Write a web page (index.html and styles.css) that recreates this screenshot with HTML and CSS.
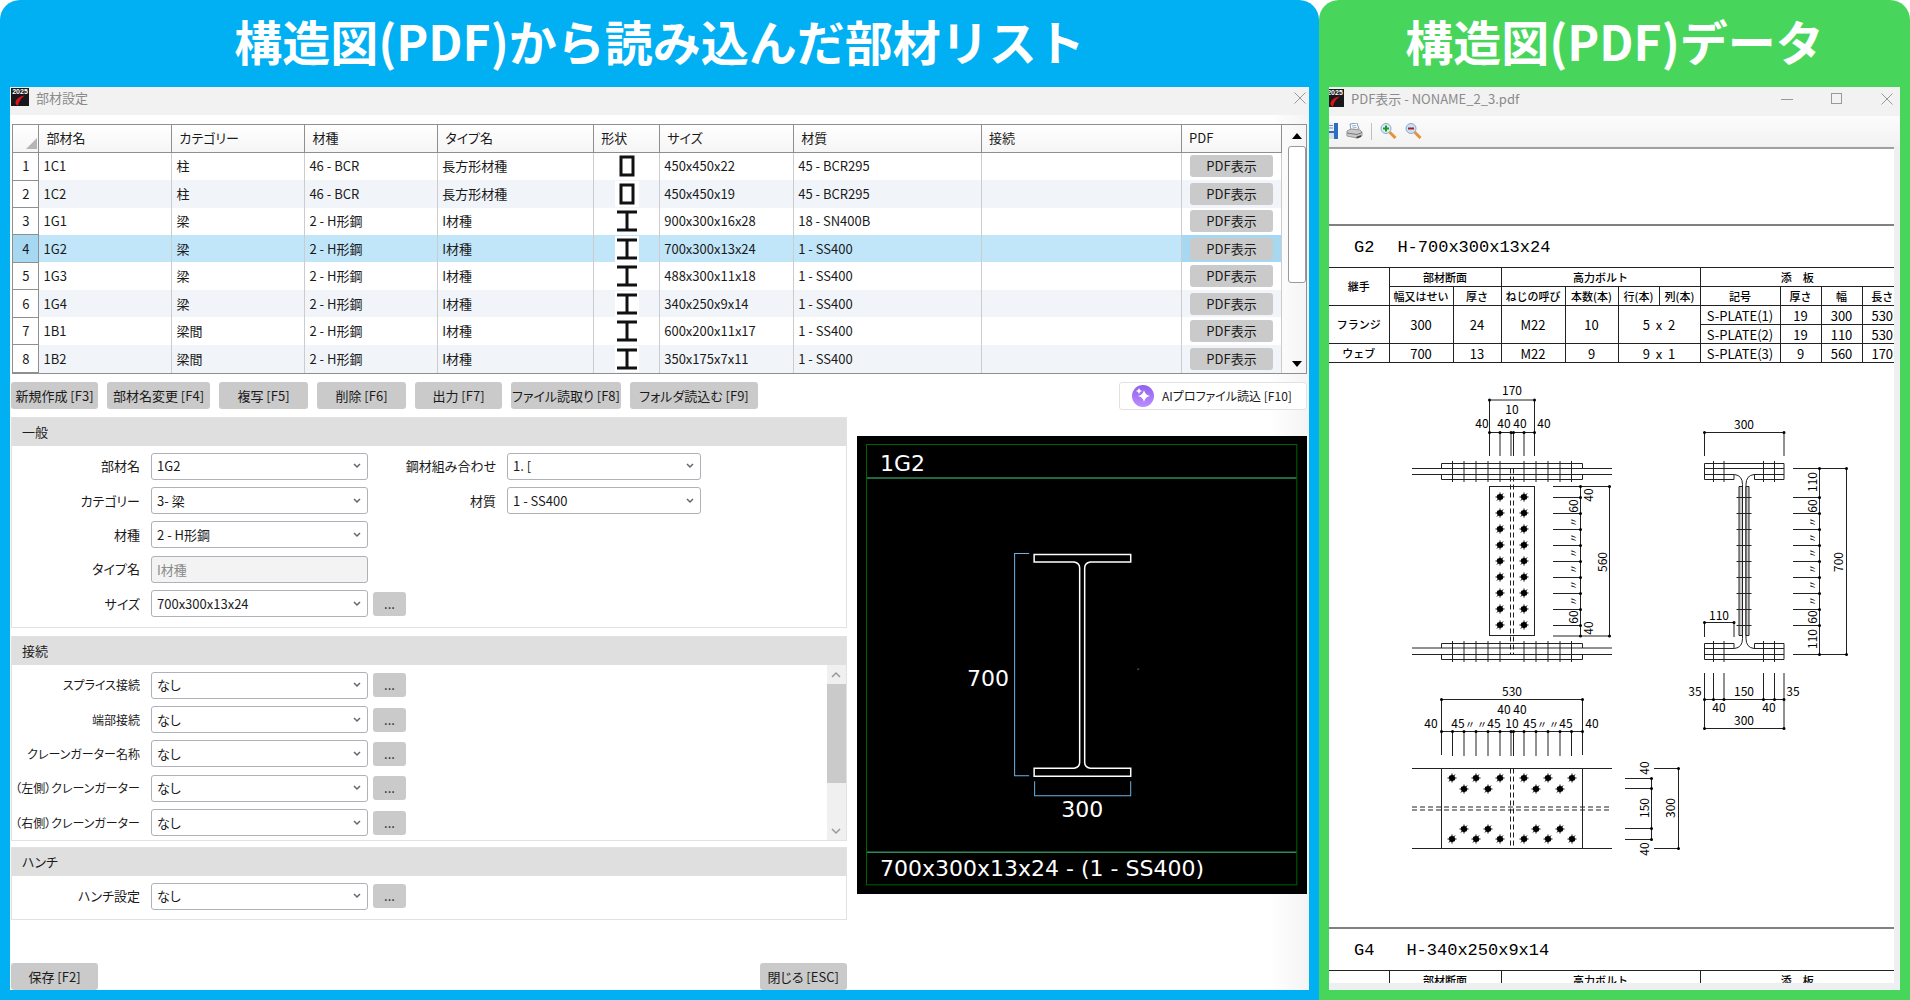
FILE: index.html
```
<!DOCTYPE html>
<html lang="ja">
<head>
  <meta charset="UTF-8">
  <title>部材設定</title>
  <link rel="stylesheet" href="styles.css">
</head>
<body>
  <!-- Shared symbols -->
  <svg class="symbols" aria-hidden="true">
    <symbol id="app-icon" viewBox="0 0 18 18">
      <rect width="18" height="18" fill="#17171c"/>
      <path d="M14 7.500C9 8 4.500 11 4.500 14.500c0 1.500 1 2.800 2.500 3C8 14 9.500 10 14 7.500z" fill="#e0111a"/>
      <text x="9" y="6" font-size="7" font-weight="700" fill="#fff" text-anchor="middle" font-family="Liberation Sans, sans-serif">2025</text>
    </symbol>
    <symbol id="shape-h" viewBox="0 0 24 26">
      <rect width="24" height="26" fill="#fff"/>
      <path d="M2 4h20M12 4v18M2 22h20" stroke="#111" stroke-width="3" fill="none"/>
    </symbol>
    <symbol id="shape-box" viewBox="0 0 24 26">
      <rect width="24" height="26" fill="#fff"/>
      <rect x="6" y="4" width="12" height="18" stroke="#111" stroke-width="3" fill="none"/>
    </symbol>
    <symbol id="icon-close" viewBox="0 0 12 12">
      <path d="M0.500 0.500l11 11M11.500 0.500l-11 11" stroke="#999" fill="none"/>
    </symbol>
    <symbol id="bolt" viewBox="-6 -6 12 12" overflow="visible">
      <circle r="3"/>
      <path d="M-4.500 0h9M0-4.500v9M-3 3.500l6-7M-3-2l6 4" stroke="#000" fill="none"/>
    </symbol>
  </svg>

  <div class="page">
    <section class="panel panel-blue">
      <h1>構造図(PDF)から読み込んだ部材リスト</h1>
      <div class="window">
        <header class="titlebar">
          <svg class="app-icon"><use href="#app-icon"/></svg>
          <span>部材設定</span>
          <button class="win-btn" aria-label="閉じる"><svg width="12" height="12"><use href="#icon-close"/></svg></button>
        </header>

        <div class="grid-wrap">
          <table class="grid">
            <colgroup>
              <col class="w26"><col class="w133"><col class="w133"><col class="w133"><col class="w156"><col class="w66"><col class="w134"><col class="w188"><col class="w200"><col class="w100">
            </colgroup>
            <thead>
              <tr><th class="corner"><svg width="11" height="11"><path d="M11 0v11H0z" fill="#b5b5b5"/></svg></th><th>部材名</th><th>カテゴリー</th><th>材種</th><th>タイプ名</th><th>形状</th><th>サイズ</th><th>材質</th><th>接続</th><th>PDF</th></tr>
            </thead>
            <tbody>
              <tr><th scope="row">1</th><td>1C1</td><td>柱</td><td>46 - BCR</td><td>長方形材種</td><td class="shape"><svg><use href="#shape-box"/></svg></td><td>450x450x22</td><td>45 - BCR295</td><td></td><td class="pdf"><button>PDF表示</button></td></tr>
              <tr><th scope="row">2</th><td>1C2</td><td>柱</td><td>46 - BCR</td><td>長方形材種</td><td class="shape"><svg><use href="#shape-box"/></svg></td><td>450x450x19</td><td>45 - BCR295</td><td></td><td class="pdf"><button>PDF表示</button></td></tr>
              <tr><th scope="row">3</th><td>1G1</td><td>梁</td><td>2 - H形鋼</td><td>I材種</td><td class="shape"><svg><use href="#shape-h"/></svg></td><td>900x300x16x28</td><td>18 - SN400B</td><td></td><td class="pdf"><button>PDF表示</button></td></tr>
              <tr class="selected"><th scope="row">4</th><td>1G2</td><td>梁</td><td>2 - H形鋼</td><td>I材種</td><td class="shape"><svg><use href="#shape-h"/></svg></td><td>700x300x13x24</td><td>1 - SS400</td><td></td><td class="pdf"><button>PDF表示</button></td></tr>
              <tr><th scope="row">5</th><td>1G3</td><td>梁</td><td>2 - H形鋼</td><td>I材種</td><td class="shape"><svg><use href="#shape-h"/></svg></td><td>488x300x11x18</td><td>1 - SS400</td><td></td><td class="pdf"><button>PDF表示</button></td></tr>
              <tr><th scope="row">6</th><td>1G4</td><td>梁</td><td>2 - H形鋼</td><td>I材種</td><td class="shape"><svg><use href="#shape-h"/></svg></td><td>340x250x9x14</td><td>1 - SS400</td><td></td><td class="pdf"><button>PDF表示</button></td></tr>
              <tr><th scope="row">7</th><td>1B1</td><td>梁間</td><td>2 - H形鋼</td><td>I材種</td><td class="shape"><svg><use href="#shape-h"/></svg></td><td>600x200x11x17</td><td>1 - SS400</td><td></td><td class="pdf"><button>PDF表示</button></td></tr>
              <tr><th scope="row">8</th><td>1B2</td><td>梁間</td><td>2 - H形鋼</td><td>I材種</td><td class="shape"><svg><use href="#shape-h"/></svg></td><td>350x175x7x11</td><td>1 - SS400</td><td></td><td class="pdf"><button>PDF表示</button></td></tr>
            </tbody>
          </table>
          <div class="grid-scroll">
            <svg width="10" height="6"><path d="M5 0l5 6H0z"/></svg>
            <div class="grid-thumb"></div>
            <svg width="10" height="6"><path d="M5 6l5-6H0z"/></svg>
          </div>
        </div>

        <div class="toolbar">
          <button class="btn b87">新規作成 [F3]</button>
          <button class="btn b103">部材名変更 [F4]</button>
          <button class="btn b89">複写 [F5]</button>
          <button class="btn b89">削除 [F6]</button>
          <button class="btn b87">出力 [F7]</button>
          <button class="btn b110">ファイル読取り [F8]</button>
          <button class="btn b128">フォルダ読込む [F9]</button>
          <button class="btn-ai">
            <svg width="22" height="22" viewBox="0 0 22 22">
              <defs><linearGradient id="ai" x1="0" y1="0" x2="0" y2="1"><stop offset="0" stop-color="#8f62ea"/><stop offset="1" stop-color="#bd8cff"/></linearGradient></defs>
              <circle cx="11" cy="11" r="11" fill="url(#ai)"/>
              <path d="M12 5q1 5 6 6q-5 1-6 6q-1-5-6-6q5-1 6-6zM7 3q.500 2.500 3 3q-2.500.500-3 3q-.500-2.500-3-3q2.500-.500 3-3z" fill="#fff"/>
            </svg>
            AIプロファイル読込 [F10]
          </button>
        </div>

        <div class="main">
          <form class="forms" id="member-form">
            <fieldset class="group">
              <legend>一般</legend>
              <div class="group-body">
                <div class="fields">
                  <div class="row">
                    <label for="name">部材名</label>
                    <select id="name"><option>1G2</option></select>
                    <label for="combo">鋼材組み合わせ</label>
                    <select class="select2" id="combo"><option>1. [</option></select>
                  </div>
                  <div class="row">
                    <label for="category">カテゴリー</label>
                    <select id="category"><option>3- 梁</option></select>
                    <label for="material">材質</label>
                    <select class="select2" id="material"><option>1 - SS400</option></select>
                  </div>
                  <div class="row">
                    <label for="kind">材種</label>
                    <select id="kind"><option>2 - H形鋼</option></select>
                  </div>
                  <div class="row">
                    <label for="type">タイプ名</label>
                    <input type="text" id="type" value="I材種" disabled>
                  </div>
                  <div class="row">
                    <label for="size">サイズ</label>
                    <select id="size"><option>700x300x13x24</option></select>
                    <button type="button" class="more">...</button>
                  </div>
                </div>
              </div>
            </fieldset>

            <fieldset class="group group-joint">
              <legend>接続</legend>
              <div class="group-body">
                <div class="fields">
                  <div class="row">
                    <label for="splice">スプライス接続</label>
                    <select id="splice"><option>なし</option></select>
                    <button type="button" class="more">...</button>
                  </div>
                  <div class="row">
                    <label for="end">端部接続</label>
                    <select id="end"><option>なし</option></select>
                    <button type="button" class="more">...</button>
                  </div>
                  <div class="row">
                    <label for="crane">クレーンガーター名称</label>
                    <select id="crane"><option>なし</option></select>
                    <button type="button" class="more">...</button>
                  </div>
                  <div class="row">
                    <label for="crane-left">（左側）クレーンガーター</label>
                    <select id="crane-left"><option>なし</option></select>
                    <button type="button" class="more">...</button>
                  </div>
                  <div class="row">
                    <label for="crane-right">（右側）クレーンガーター</label>
                    <select id="crane-right"><option>なし</option></select>
                    <button type="button" class="more">...</button>
                  </div>
                </div>
                <div class="side-scroll">
                  <svg width="10" height="19" viewBox="0 0 10 19"><path d="M1 12l4-4 4 4" stroke="#999" stroke-width="1.500" fill="none"/></svg>
                  <div class="side-thumb"></div>
                  <svg width="10" height="19" viewBox="0 0 10 19"><path d="M1 8l4 4 4-4" stroke="#999" stroke-width="1.500" fill="none"/></svg>
                </div>
              </div>
            </fieldset>

            <fieldset class="group group-haunch">
              <legend>ハンチ</legend>
              <div class="group-body">
                <div class="fields">
                  <div class="row">
                    <label for="haunch">ハンチ設定</label>
                    <select id="haunch"><option>なし</option></select>
                    <button type="button" class="more">...</button>
                  </div>
                </div>
              </div>
            </fieldset>

            <div class="actions">
              <button type="button" class="btn b87">保存 [F2]</button>
              <button type="button" class="btn b87">閉じる [ESC]</button>
            </div>
          </form>

          <!-- Section preview -->
          <svg class="preview" viewBox="0 0 450 458">
            <rect width="450" height="458"/>
            <rect x="9.500" y="8.500" width="430" height="440" fill="none" stroke="#006400"/>
            <path d="M10 42h429M10 416h429" stroke="#2e8b57" stroke-width="1.500"/>
            <g fill="none" stroke="#fff" stroke-width="1.500">
              <path d="M177 118.500h96.500v7.500H233q-5.500 1-5.500 6v194q0 5 5.500 6h40.500v8H177v-8h40q5.500-1 5.500-6V132q0-5-5.500-6h-40z"/>
            </g>
            <path d="M172 117.500h-14.500v222H172M177.500 345v14.500h96V345" fill="none" stroke="#6db3e6"/>
            <circle cx="281" cy="233" r="1" fill="#444"/>
            <g class="preview-text">
              <text x="23" y="35">1G2</text>
              <text x="131" y="250" text-anchor="middle">700</text>
              <text x="225" y="381" text-anchor="middle">300</text>
              <text x="23" y="440">700x300x13x24 - (1 - SS400)</text>
            </g>
          </svg>
        </div>
      </div>
    </section>

    <section class="panel panel-green">
      <h1>構造図(PDF)データ</h1>
      <div class="window pdf-window">
        <header class="titlebar">
          <svg class="app-icon app-icon-cut" viewBox="3 0 15 18"><use href="#app-icon" width="18" height="18"/></svg>
          <span>PDF表示 - NONAME_2_3.pdf</span>
          <div class="win-btns">
            <button class="win-btn" aria-label="最小化"><svg width="12" height="12"><path d="M0 6.500h12" stroke="#999"/></svg></button>
            <button class="win-btn" aria-label="最大化"><svg width="12" height="12"><rect x=".500" y=".500" width="10" height="10" stroke="#999" fill="none"/></svg></button>
            <button class="win-btn" aria-label="閉じる"><svg width="12" height="12"><use href="#icon-close"/></svg></button>
          </div>
        </header>
        <div class="pdf-tools">
          <button aria-label="保存">
            <svg width="9" height="16" viewBox="7 0 9 16"><path d="M0 0h16v16H0z" fill="#2f6cc0"/><path d="M3 0h9v8H3z" fill="#e8f0fa"/><path d="M4 10h8v6H4z" fill="#d5dde8"/><path d="M5 2.500h6M5 5h6" stroke="#88a"/></svg>
          </button>
          <button aria-label="印刷">
            <svg width="17" height="16" viewBox="0 0 17 16"><path d="M4 1l7-1 2 6-8 1z" fill="#fff" stroke="#8a9bb0"/><path d="M6 3l4-.500M6.500 5l4-.500" stroke="#7fb0e0"/><path d="M1 8l4-2 9 1 2 2v4l-5 2-10-2z" fill="#c9c9c9" stroke="#999"/><path d="M1 10l10 1.500 5-2" stroke="#777" fill="none"/><path d="M10 14l5-2v2l-4 1.500z" fill="#444"/></svg>
          </button>
          <span class="sep"></span>
          <button aria-label="拡大">
            <svg width="17" height="16" viewBox="0 0 17 16"><path d="M9.500 9l6 6" stroke="#e8903a" stroke-width="3"/><circle cx="6" cy="5.500" r="5" fill="#d8ebfa" stroke="#8aa9c8"/><path d="M6 2.500v6M3 5.500h6" stroke="#1f9a1f" stroke-width="2"/></svg>
          </button>
          <button aria-label="縮小">
            <svg width="17" height="16" viewBox="0 0 17 16"><path d="M9.500 9l6 6" stroke="#e8903a" stroke-width="3"/><circle cx="6" cy="5.500" r="5" fill="#c8e2f8" stroke="#8aa9c8"/><path d="M3 5.500h6" stroke="#b01f1f" stroke-width="2"/></svg>
          </button>
        </div>

        <div class="sheet">
          <div class="sheet-title"><span>G2</span><span>H-700x300x13x24</span></div>
          <table class="joint">
            <colgroup>
              <col class="j60"><col class="j64"><col class="j48"><col class="j64"><col class="j53"><col class="j41"><col class="j41"><col class="j80"><col class="j41"><col class="j41"><col class="j32">
            </colgroup>
            <thead>
              <tr><th rowspan="2">継手</th><th colspan="2">部材断面</th><th colspan="4">高力ボルト</th><th colspan="4">添　板</th></tr>
              <tr><th>幅又はせい</th><th>厚さ</th><th>ねじの呼び</th><th>本数(本)</th><th>行(本)</th><th>列(本)</th><th>記号</th><th>厚さ</th><th>幅</th><th class="cut">長さ</th></tr>
            </thead>
            <tbody>
              <tr><th rowspan="2">フランジ</th><td rowspan="2">300</td><td rowspan="2">24</td><td rowspan="2">M22</td><td rowspan="2">10</td><td rowspan="2" colspan="2">5 &nbsp;x &nbsp;2</td><td>S-PLATE(1)</td><td>19</td><td>300</td><td class="cut">530</td></tr>
              <tr><td>S-PLATE(2)</td><td>19</td><td>110</td><td class="cut">530</td></tr>
              <tr><th>ウェブ</th><td>700</td><td>13</td><td>M22</td><td>9</td><td colspan="2">9 &nbsp;x &nbsp;1</td><td>S-PLATE(3)</td><td>9</td><td>560</td><td class="cut">170</td></tr>
            </tbody>
          </table>

          <svg class="drawing" viewBox="0 0 565 563">
            <!-- Elevation -->
            <path d="M160.500 92V36h45v56M160.500 68.500h45M171 68v24M182 68v24M184.500 68v24M195 68v24"/>
            <path d="M83 104.500h200M83 110.500h200M112.500 104V99.500h141V104M112.500 111v4.500h141V111"/>
            <path d="M83 284h200M83 290.500h200M112.500 284v-4.500h141v4.500M112.500 291v4.500h141V291"/>
            <path d="M123.500 97v21M135 97v21M147 97v21M159 97v21M171 97v21M195 97v21M207 97v21M219 97v21M231 97v21M242.500 97v21"/>
            <path d="M123.500 277v21M135 277v21M147 277v21M159 277v21M171 277v21M195 277v21M207 277v21M219 277v21M231 277v21M242.500 277v21"/>
            <rect x="160.500" y="122.500" width="45" height="149"/>
            <path class="dash" d="M181.500 104.500v186M184.500 104.500v186"/>
            <g class="bolts">
              <use href="#bolt" x="165" y="127" width="12" height="12"/><use href="#bolt" x="189" y="127" width="12" height="12"/>
              <use href="#bolt" x="165" y="143" width="12" height="12"/><use href="#bolt" x="189" y="143" width="12" height="12"/>
              <use href="#bolt" x="165" y="159" width="12" height="12"/><use href="#bolt" x="189" y="159" width="12" height="12"/>
              <use href="#bolt" x="165" y="175" width="12" height="12"/><use href="#bolt" x="189" y="175" width="12" height="12"/>
              <use href="#bolt" x="165" y="191" width="12" height="12"/><use href="#bolt" x="189" y="191" width="12" height="12"/>
              <use href="#bolt" x="165" y="207" width="12" height="12"/><use href="#bolt" x="189" y="207" width="12" height="12"/>
              <use href="#bolt" x="165" y="223" width="12" height="12"/><use href="#bolt" x="189" y="223" width="12" height="12"/>
              <use href="#bolt" x="165" y="239" width="12" height="12"/><use href="#bolt" x="189" y="239" width="12" height="12"/>
              <use href="#bolt" x="165" y="255" width="12" height="12"/><use href="#bolt" x="189" y="255" width="12" height="12"/>
            </g>
            <path d="M224 122.500h56.500v149.500H224M251.500 122.500v149M224 133.500h27M224 149.500h27M224 165.500h27M224 181.500h27M224 197.500h27M224 213.500h27M224 229.500h27M224 245.500h27M224 261.500h27"/>
            <path class="dots" d="M160.500 36h0M205.500 36h0M160.500 68.500h0M171 68.500h0M182 68.500h0M184.500 68.500h0M195 68.500h0M205.500 68.500h0M251.500 122.500h0M280.500 122.500h0M251.500 133.500h0M251.500 149.500h0M251.500 165.500h0M251.500 181.500h0M251.500 197.500h0M251.500 213.500h0M251.500 229.500h0M251.500 245.500h0M251.500 261.500h0M251.500 272h0M280.500 272h0"/>
            <text x="183" y="31">170</text>
            <text x="183" y="50">10</text>
            <text x="153" y="64">40</text><text x="175" y="64">40</text><text x="191" y="64">40</text><text x="215" y="64">40</text>
            <text transform="translate(264 131) rotate(-90)">40</text>
            <text transform="translate(249 142) rotate(-90)">60</text>
            <text class="ditto" transform="translate(248 158) rotate(-90)">〃</text>
            <text class="ditto" transform="translate(248 174) rotate(-90)">〃</text>
            <text class="ditto" transform="translate(248 189) rotate(-90)">〃</text>
            <text class="ditto" transform="translate(248 205) rotate(-90)">〃</text>
            <text class="ditto" transform="translate(248 221) rotate(-90)">〃</text>
            <text class="ditto" transform="translate(248 237) rotate(-90)">〃</text>
            <text transform="translate(249 253) rotate(-90)">60</text>
            <text transform="translate(264 264) rotate(-90)">40</text>
            <text transform="translate(278 198) rotate(-90)">560</text>

            <!-- Cross section -->
            <path d="M375.500 92V68.500h79.500V92"/>
            <path d="M375.500 99.500h79.500v16h-29.500V110.500M375.500 99.500v16H405V110.500M375.500 104.500H455M375.500 110.500h30q8 1 8 10v154q0 9-8 10h-30M455 110.500h-30q-8 1-8 10v154q0 9 8 10h30"/>
            <path d="M375.500 295.500h79.500v-16h-29.500v5M375.500 295.500v-16H405v5M375.500 290.500H455"/>
            <path class="plate" d="M410 122.500h3.500v149H410zM417 122.500h3v149h-3z"/>
            <path d="M384.500 97v21M395 97v21M434.500 97v21M445.500 97v21M384.500 277v21M395 277v21M434.500 277v21M445.500 277v21"/>
            <path d="M407.500 133.500h15M407.500 149.500h15M407.500 165.500h15M407.500 181.500h15M407.500 197.500h15M407.500 213.500h15M407.500 229.500h15M407.500 245.500h15M407.500 261.500h15"/>
            <path d="M375.500 273v-14.500H405V273"/>
            <path d="M464 104.500h53.500v186H464M490.500 104.500v186M464 133.500h27M464 149.500h27M464 165.500h27M464 181.500h27M464 197.500h27M464 213.500h27M464 229.500h27M464 245.500h27M464 261.500h27"/>
            <path d="M375.500 309v55.500H455V309M375.500 335.500H455M384.500 309v26M395 309v26M434.500 309v26M445.500 309v26"/>
            <path class="dots" d="M375.500 68.500h0M455 68.500h0M375.500 258.500h0M405 258.500h0M490.500 104.500h0M517.500 104.500h0M490.500 133.500h0M490.500 149.500h0M490.500 165.500h0M490.500 181.500h0M490.500 197.500h0M490.500 213.500h0M490.500 229.500h0M490.500 245.500h0M490.500 261.500h0M490.500 290.500h0M517.500 290.500h0M375.500 335.500h0M384.500 335.500h0M395 335.500h0M434.500 335.500h0M445.500 335.500h0M455 335.500h0M375.500 364.500h0M455 364.500h0"/>
            <text x="415" y="65">300</text>
            <text x="390" y="256">110</text>
            <text x="366" y="332">35</text><text x="415" y="332">150</text><text x="464" y="332">35</text>
            <text x="390" y="348">40</text><text x="440" y="348">40</text>
            <text x="415" y="361">300</text>
            <text transform="translate(488 118) rotate(-90)">110</text>
            <text transform="translate(488 142) rotate(-90)">60</text>
            <text class="ditto" transform="translate(487 158) rotate(-90)">〃</text>
            <text class="ditto" transform="translate(487 174) rotate(-90)">〃</text>
            <text class="ditto" transform="translate(487 189) rotate(-90)">〃</text>
            <text class="ditto" transform="translate(487 205) rotate(-90)">〃</text>
            <text class="ditto" transform="translate(487 221) rotate(-90)">〃</text>
            <text class="ditto" transform="translate(487 237) rotate(-90)">〃</text>
            <text transform="translate(488 253) rotate(-90)">60</text>
            <text transform="translate(488 275) rotate(-90)">110</text>
            <text transform="translate(514 198) rotate(-90)">700</text>

            <!-- Plan -->
            <path d="M112.500 391v-55.500h141V391M112.500 367.500h141M123.500 368v24M135 368v24M147 368v24M159 368v24M171 368v24M182 368v24M184.500 368v24M195 368v24M207 368v24M219 368v24M231 368v24M242.500 368v24"/>
            <path d="M83 404.500h200M83 484.500h200M112.500 404.500v80M253.500 404.500v80"/>
            <path class="dash" d="M83 443h200M83 446h200M181.500 404.500v80M184.500 404.500v80"/>
            <g class="bolts">
              <use href="#bolt" x="117" y="408" width="12" height="12"/><use href="#bolt" x="141" y="408" width="12" height="12"/><use href="#bolt" x="165" y="408" width="12" height="12"/>
              <use href="#bolt" x="189" y="408" width="12" height="12"/><use href="#bolt" x="213" y="408" width="12" height="12"/><use href="#bolt" x="237" y="408" width="12" height="12"/>
              <use href="#bolt" x="129" y="419" width="12" height="12"/><use href="#bolt" x="153" y="419" width="12" height="12"/><use href="#bolt" x="201" y="419" width="12" height="12"/><use href="#bolt" x="225" y="419" width="12" height="12"/>
              <use href="#bolt" x="129" y="459" width="12" height="12"/><use href="#bolt" x="153" y="459" width="12" height="12"/><use href="#bolt" x="201" y="459" width="12" height="12"/><use href="#bolt" x="225" y="459" width="12" height="12"/>
              <use href="#bolt" x="117" y="469" width="12" height="12"/><use href="#bolt" x="141" y="469" width="12" height="12"/><use href="#bolt" x="165" y="469" width="12" height="12"/>
              <use href="#bolt" x="189" y="469" width="12" height="12"/><use href="#bolt" x="213" y="469" width="12" height="12"/><use href="#bolt" x="237" y="469" width="12" height="12"/>
            </g>
            <path d="M296 414.500h26.500v61H296M296 424.500h26.500M296 464.500h26.500M325 404.500h24.500v80H325"/>
            <path class="dots" d="M112.500 335.500h0M253.500 335.500h0M112.500 367.500h0M123.500 367.500h0M135 367.500h0M147 367.500h0M159 367.500h0M171 367.500h0M182 367.500h0M184.500 367.500h0M195 367.500h0M207 367.500h0M219 367.500h0M231 367.500h0M242.500 367.500h0M253.500 367.500h0M322.500 414.500h0M322.500 424.500h0M322.500 464.500h0M322.500 475.500h0M349.500 404.500h0M349.500 484.500h0"/>
            <text x="183" y="332">530</text>
            <text x="175" y="350">40</text><text x="191" y="350">40</text>
            <text x="102" y="364">40</text><text x="129" y="364">45</text><text class="ditto" x="141" y="364">〃</text><text class="ditto" x="153" y="364">〃</text><text x="165" y="364">45</text>
            <text x="183" y="364">10</text>
            <text x="201" y="364">45</text><text class="ditto" x="213" y="364">〃</text><text class="ditto" x="225" y="364">〃</text><text x="237" y="364">45</text><text x="263" y="364">40</text>
            <text transform="translate(320 404) rotate(-90)">40</text>
            <text transform="translate(320 444) rotate(-90)">150</text>
            <text transform="translate(320 485) rotate(-90)">40</text>
            <text transform="translate(346 444) rotate(-90)">300</text>
          </svg>

          <div class="sheet-title sheet-title-next"><span>G4</span><span>H-340x250x9x14</span></div>
          <table class="joint">
            <colgroup>
              <col class="j60"><col class="j64"><col class="j48"><col class="j64"><col class="j53"><col class="j41"><col class="j41"><col class="j80"><col class="j41"><col class="j41"><col class="j32">
            </colgroup>
            <thead>
              <tr><th></th><th colspan="2">部材断面</th><th colspan="4">高力ボルト</th><th colspan="4">添　板</th></tr>
            </thead>
          </table>
        </div>
      </div>
    </section>
  </div>
</body>
</html>
```
FILE: styles.css
```
* {
  box-sizing: border-box;
}

body {
  margin: 0;
  font-family: "Noto Sans CJK JP", sans-serif;
  font-size: 13px;
  line-height: 18px;
  color: #1a1a1a;
  background-color: #fff;
}

button,
input,
select {
  font: inherit;
  color: inherit;
  padding: 0;
}

svg {
  display: block;
}

.symbols {
  position: absolute;
  width: 0;
  height: 0;
}

/* Two panels side by side */
.page {
  display: grid;
  grid-template-columns: 1319fr 591fr;
  height: 100vh;
}

.panel {
  display: flex;
  flex-direction: column;
  min-width: 0;
  min-height: 0;
  padding: 0 10px 10px;
  border-radius: 20px 20px 0 0;
}

.panel-blue {
  background-color: #00b0f3;
}

.panel-green {
  background-color: #47d65b;
}

h1 {
  margin: 0;
  height: 87px;
  font-size: 48px;
  line-height: 80px;
  font-weight: 700;
  text-align: center;
  white-space: nowrap;
  color: #fff;
}

.window {
  display: flex;
  flex-direction: column;
  flex: 1;
  min-height: 0;
  overflow: hidden;
  background: linear-gradient(to left, #f4f4f4, #fff 40px);
}

.titlebar {
  display: flex;
  align-items: flex-start;
  gap: 7px;
  height: 28px;
  padding: 1px 2px 0 1px;
  background-color: #f2f2f2;
  color: #8a8a8a;
}

.titlebar span {
  line-height: 20px;
}

.app-icon {
  width: 18px;
  height: 18px;
}

.win-btn {
  margin-left: auto;
  padding: 4px 1px;
  border: 0;
  background: none;
}

/* Member list */
.grid-wrap {
  display: flex;
  margin: 9px 2px 0;
  border: 1px solid #8f8f8f;
}

.grid {
  flex: 1;
  height: 248px;
  table-layout: fixed;
  border-collapse: collapse;
  background-color: #fff;
  font-feature-settings: "palt";
}

.grid th,
.grid td {
  padding: 0 5px 0 4px;
  border-right: 1px solid #ccc;
  font-weight: 400;
  text-align: left;
  white-space: nowrap;
}

.grid thead th {
  height: 27px;
  padding-left: 7px;
  border-right-color: #8f8f8f;
  border-bottom: 1px solid #8f8f8f;
  background: linear-gradient(#fff, #f5f5f5);
}

.grid thead .corner {
  padding: 10px 0 0 13px;
}

.grid tbody th {
  padding: 0;
  border-right: 1px solid #8f8f8f;
  border-bottom: 1px solid #8f8f8f;
  background-color: #fff;
  text-align: center;
}

.grid tbody tr:nth-child(even) {
  background-color: #f1f5f9;
}

.grid tbody tr.selected {
  background-color: #c2e6f9;
}

.grid .selected th,
.grid .selected .pdf {
  background-color: #a6d8f2;
}

.grid .shape {
  padding: 0;
}

.shape svg {
  width: 24px;
  height: 26px;
  margin: 0 auto;
}

.grid .pdf {
  padding: 0 8px;
}

.pdf button {
  display: block;
  width: 100%;
  height: 22px;
  border: 0;
  border-radius: 3px;
  background-color: #cacaca;
  line-height: 20px;
}

.w26 { width: 26px; }
.w66 { width: 66px; }
.w100 { width: 100px; }
.w133 { width: 133px; }
.w134 { width: 134px; }
.w156 { width: 156px; }
.w188 { width: 188px; }
.w200 { width: 200px; }

.grid-scroll {
  display: flex;
  flex-direction: column;
  align-items: center;
  width: 24px;
  padding: 8px 0 6px 6px;
}

.grid-thumb {
  width: 18px;
  height: 137px;
  margin: 7px 0 auto;
  border: 1px solid #999;
  border-radius: 3px;
  background-color: #fff;
}

/* Buttons below the list */
.toolbar {
  display: flex;
  gap: 9px;
  padding: 8px 2px 7px 1px;
  font-feature-settings: "palt";
}

.btn {
  height: 27px;
  border: 0;
  border-radius: 3px;
  background-color: #cacaca;
  white-space: nowrap;
}

.b87 { width: 87px; }
.b89 { width: 89px; }
.b103 { width: 103px; }
.b110 { width: 110px; }
.b128 { width: 128px; }

.btn-ai {
  display: flex;
  align-items: center;
  gap: 8px;
  width: 188px;
  height: 28px;
  margin-left: auto;
  padding-left: 12px;
  border: 1px solid #e2e2e2;
  border-radius: 3px;
  background-color: #fff;
  font-size: 12px;
  white-space: nowrap;
}

/* Forms and preview */
.main {
  display: grid;
  grid-template-columns: 835fr 450fr;
  gap: 10px;
  flex: 1;
  padding: 0 2px 0 1px;
}

.forms {
  display: flex;
  flex-direction: column;
  font-feature-settings: "palt";
}

.group {
  min-width: 0;
  margin: 0 0 8px;
  padding: 0;
  border: 1px solid #e2e2e2;
}

.group legend {
  float: left;
  width: 100%;
  height: 28px;
  padding: 0 10px;
  line-height: 27px;
  background-color: #dfdfdf;
}

.group-body {
  clear: both;
  display: flex;
  justify-content: space-between;
}

.fields {
  display: grid;
  grid-auto-rows: 1fr;
  height: 172px;
  margin: 3px 0 6px;
}

.group-joint {
  margin-bottom: 6px;
}

.group-joint .fields {
  margin-bottom: 0;
}

.group-haunch .fields {
  height: 34px;
  margin-bottom: 6px;
}

.row {
  display: flex;
  align-items: center;
}

.row label {
  display: flex;
  justify-content: flex-end;
  width: 128px;
  margin-right: 11px;
  white-space: nowrap;
}

.group-joint .row label {
  font-size: 12px;
}

.row select,
.row input {
  width: 217px;
  height: 27px;
  padding: 0 5px;
  border: 1px solid #b0b0b8;
  border-radius: 3px;
  background-color: #fff;
}

.row select {
  appearance: none;
  background-image: url("data:image/svg+xml,%3Csvg xmlns='http://www.w3.org/2000/svg' width='8' height='6'%3E%3Cpath d='M1 1l3 3 3-3' fill='none' stroke='%23666' stroke-width='1.5'/%3E%3C/svg%3E");
  background-repeat: no-repeat;
  background-position: right 6px center;
}

.row .select2 {
  width: 194px;
}

.row input:disabled {
  background-color: #f3f3f3;
  color: #8a8a8a;
}

.more {
  width: 33px;
  height: 24px;
  margin-left: 5px;
  border: 0;
  border-radius: 3px;
  background-color: #cacaca;
}

.side-scroll {
  display: flex;
  flex-direction: column;
  align-items: center;
  width: 19px;
  background-color: #f0f0f0;
}

.side-thumb {
  width: 19px;
  height: 99px;
  margin-bottom: auto;
  background-color: #cacaca;
}

.actions {
  display: flex;
  justify-content: space-between;
  margin-top: auto;
}

.preview {
  width: 100%;
  margin-top: 19px;
}

.preview-text {
  fill: #fff;
  font-family: "DejaVu Sans", sans-serif;
  font-size: 22px;
}

/* PDF window */
.pdf-window {
  background: #eeeff0;
}

.pdf-window .titlebar {
  height: 29px;
  padding: 2px 6px 0 0;
}

.app-icon-cut {
  width: 15px;
}

.win-btns {
  display: flex;
  gap: 36px;
  margin-left: auto;
}

.pdf-tools {
  display: flex;
  align-items: center;
  gap: 8px;
  height: 30px;
  background: linear-gradient(#fcfcfc, #f2f2f2);
}

.pdf-tools button {
  border: 0;
  background: none;
}

.sep {
  width: 1px;
  height: 17px;
  background-color: #c0c0c0;
}

/* Drawing sheet */
.sheet {
  flex: 1;
  min-height: 0;
  margin: 1px 6px 7px 0;
  padding-top: 75px;
  overflow: hidden;
  border-top: 2px solid #a0a0a0;
  background-color: #fff;
  color: #000;
}

.sheet-title {
  display: flex;
  gap: 23px;
  height: 43px;
  padding-left: 25px;
  border-top: 2px solid #808080;
  font-family: "Liberation Mono", monospace;
  font-size: 17px;
  line-height: 43px;
}

.sheet-title-next {
  gap: 32px;
}

.joint {
  width: 100%;
  table-layout: fixed;
  border-collapse: collapse;
}

.joint th,
.joint td {
  height: 19px;
  padding: 0;
  border: 1px solid #222;
  line-height: 17px;
  text-align: center;
  white-space: nowrap;
  overflow: hidden;
}

.joint th {
  font-size: 11px;
  font-weight: 500;
}

.joint tr > :first-child[rowspan],
.joint tr > th:first-child {
  border-left: 0;
}

.joint tr > :last-child {
  border-right: 0;
}

.joint .cut {
  padding-left: 8px;
}

.joint thead tr:nth-child(2) th:first-child {
  border-left: 1px solid #222;
}

.j32 { width: 32px; }
.j41 { width: 41px; }
.j48 { width: 48px; }
.j53 { width: 53px; }
.j60 { width: 60px; }
.j64 { width: 64px; }
.j80 { width: 80px; }

.drawing {
  width: 100%;
  margin-top: 1px;
}

.drawing > path,
.drawing > rect {
  fill: none;
  stroke: #222;
  stroke-width: 1;
}

.drawing > .dash {
  stroke-dasharray: 5 3;
}

.drawing > .plate {
  fill: #ccc;
}

.drawing > .dots {
  stroke: #000;
  stroke-width: 3;
  stroke-linecap: round;
}

.drawing text {
  font-size: 12px;
  text-anchor: middle;
}

.drawing .ditto {
  font-size: 10px;
}
```
